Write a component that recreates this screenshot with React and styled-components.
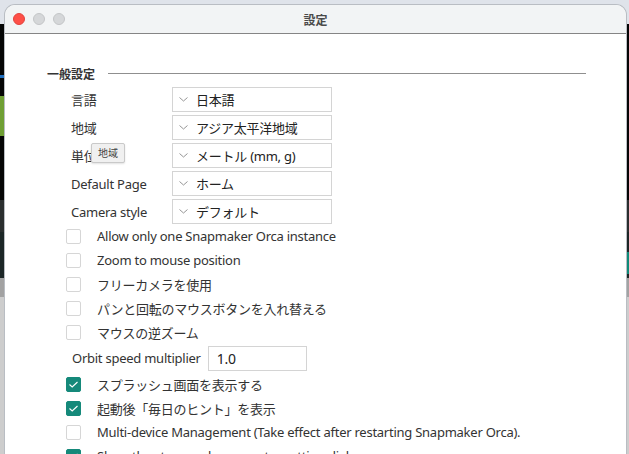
import React from "react";
import styled, { createGlobalStyle } from "styled-components";

const GlobalStyle = createGlobalStyle`
  html, body {
    margin: 0;
    padding: 0;
  }
  body {
    font-family: "Noto Sans", "Noto Sans CJK JP", sans-serif;
    color: #333;
  }
`;

const Desktop = styled.div`
  height: 454px;
  box-sizing: border-box;
  overflow: hidden;
  padding: 5px 3px 0 5px;
  background:
    linear-gradient(#6f9f34, #6f9f34) 0 96px / 5px 40px no-repeat,
    linear-gradient(#1f6fc0, #1f6fc0) 0 75px / 5px 3px no-repeat,
    linear-gradient(#0f8a78, #0f8a78) 100% 252px / 3px 22px no-repeat,
    linear-gradient(
      to bottom,
      #dfe3ea 0 24px,
      #050505 24px 200px,
      #2a2e2e 200px 232px,
      #1c2626 232px 278px,
      #a2a2a2 278px 297px,
      #cdcdcd 297px
    );
`;

const Window = styled.div`
  height: 100%;
  background: #fff;
  border-radius: 10px 10px 0 0;
  overflow: hidden;
  display: flex;
  flex-direction: column;
  box-shadow: 0 0 0 1px #b9bdc3;
`;

const TitleBar = styled.div`
  height: 28px;
  flex-shrink: 0;
  display: grid;
  grid-template-columns: 1fr auto 1fr;
  align-items: center;
  padding: 0 8px;
  background: #f2f4f5;
  border-bottom: 1px solid #858585;
`;

const Lights = styled.div`
  display: flex;
  gap: 8px;
`;

const Light = styled.span`
  width: 12px;
  height: 12px;
  border-radius: 50%;
  box-sizing: border-box;
  background: ${(p) => p.$color};
  border: 0.5px solid ${(p) => p.$edge};
`;

const Title = styled.div`
  font-family: "Noto Sans CJK JP", sans-serif;
  font-size: 12px;
  font-weight: 600;
  color: #4a4a4a;
`;

const Content = styled.div`
  position: relative;
  flex: 1;
  padding: 30px 40px 0 42px;
  letter-spacing: -0.25px;
`;

const Heading = styled.div`
  display: flex;
  align-items: center;
  gap: 13px;
  height: 18px;
  font-family: "Noto Sans CJK JP", sans-serif;
  font-size: 12px;
  font-weight: 700;
  letter-spacing: 0;
  color: #333;

  &::after {
    content: "";
    flex: 1;
    height: 1px;
    background: #8f8f8f;
  }
`;

const FormGrid = styled.div`
  display: grid;
  grid-template-columns: 101px 160px;
  grid-auto-rows: 25px;
  row-gap: 3px;
  align-items: center;
  margin: 5px 0 0 24px;
`;

const Label = styled.div`
  font-size: 13px;
  color: #333;
`;

const Combo = styled.div`
  height: 25px;
  box-sizing: border-box;
  display: flex;
  align-items: center;
  gap: 8px;
  padding: 0 6px;
  border: 1px solid #d4d4d4;
  font-size: 13px;
  color: #222;
`;

const CheckList = styled.div`
  display: flex;
  flex-direction: column;
  margin-left: ${(p) => p.$indent}px;
`;

const CheckRow = styled.div`
  height: 24px;
  display: flex;
  align-items: center;
  gap: 16px;
  font-size: 13px;
  color: #333;
  white-space: nowrap;
`;

const Box = styled.span`
  width: 15px;
  height: 15px;
  flex-shrink: 0;
  box-sizing: border-box;
  border-radius: 2px;
  display: flex;
  align-items: center;
  justify-content: center;
  background: ${(p) => (p.$checked ? "#15897a" : "#fff")};
  border: 1px solid ${(p) => (p.$checked ? "#15897a" : "#d6d6d6")};
`;

const InputRow = styled.div`
  height: 28px;
  display: flex;
  align-items: center;
  gap: 7px;
  margin-left: 25px;
  font-size: 13px;
  color: #333;
`;

const NumberBox = styled.div`
  width: 99px;
  height: 25px;
  box-sizing: border-box;
  border: 1px solid #d4d4d4;
  display: flex;
  align-items: center;
  padding: 0 8px;
  font-size: 14px;
  color: #222;
`;

const Tooltip = styled.div`
  position: absolute;
  left: 86px;
  top: 109px;
  padding: 2px 6px;
  font-family: "Noto Sans CJK JP", sans-serif;
  font-size: 10px;
  line-height: 14px;
  letter-spacing: 0;
  color: #444;
  background: #f0f0f0;
  border: 1px solid #c9c9c9;
  border-radius: 2px;
  box-shadow: 0 1px 2px rgba(0, 0, 0, 0.12);
`;

const Chevron = () => (
  <svg width="9" height="5" viewBox="0 0 9 5">
    <polyline points="0.5,0.5 4.5,4 8.5,0.5" fill="none" stroke="#8a8a8a" strokeWidth="0.9" />
  </svg>
);

const Tick = () => (
  <svg width="11" height="9" viewBox="0 0 11 9">
    <polyline points="1.5,4.5 4.2,7 9.5,2" fill="none" stroke="#fff" strokeWidth="1.1" />
  </svg>
);

const selects = [
  ["言語", "日本語"],
  ["地域", "アジア太平洋地域"],
  ["単位", "メートル (mm, g)"],
  ["Default Page", "ホーム"],
  ["Camera style", "デフォルト"],
];

const firstChecks = [
  "Allow only one Snapmaker Orca instance",
  "Zoom to mouse position",
  "フリーカメラを使用",
  "パンと回転のマウスボタンを入れ替える",
  "マウスの逆ズーム",
];

const secondChecks = [
  ["スプラッシュ画面を表示する", true],
  ["起動後「毎日のヒント」を表示", true],
  ["Multi-device Management (Take effect after restarting Snapmaker Orca).", false],
  ["Show the step mesh parameter setting dialog.", true],
];

const Check = ({ checked, children }) => (
  <CheckRow>
    <Box $checked={checked}>{checked && <Tick />}</Box>
    {children}
  </CheckRow>
);

const App = () => {
  return (
    <Desktop>
      <GlobalStyle />
      <Window>
        <TitleBar>
          <Lights>
            <Light $color="#fe4f47" $edge="#e0443e" />
            <Light $color="#d5d7d9" $edge="#c3c5c7" />
            <Light $color="#d5d7d9" $edge="#c3c5c7" />
          </Lights>
          <Title>設定</Title>
          <div />
        </TitleBar>
        <Content>
          <Heading>一般設定</Heading>
          <FormGrid>
            {selects.map(([label, value]) => (
              <React.Fragment key={label}>
                <Label>{label}</Label>
                <Combo>
                  <Chevron />
                  {value}
                </Combo>
              </React.Fragment>
            ))}
          </FormGrid>
          <CheckList $indent={19}>
            {firstChecks.map((text) => (
              <Check key={text}>{text}</Check>
            ))}
          </CheckList>
          <InputRow>
            Orbit speed multiplier
            <NumberBox>1.0</NumberBox>
          </InputRow>
          <CheckList $indent={19}>
            {secondChecks.map(([text, on]) => (
              <Check key={text} checked={on}>
                {text}
              </Check>
            ))}
          </CheckList>
          <Tooltip>地域</Tooltip>
        </Content>
      </Window>
    </Desktop>
  );
};

export default App;
